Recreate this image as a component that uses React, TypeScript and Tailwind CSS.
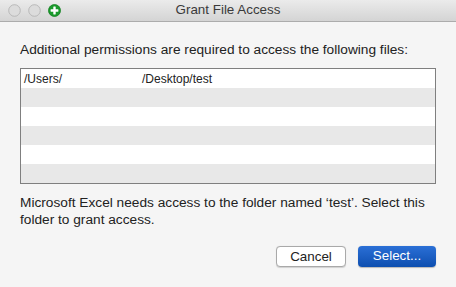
import React from 'react';

const rows = [0, 1, 2, 3, 4, 5];

const TrafficLight: React.FC<{ plus?: boolean }> = ({ plus }) =>
  plus ? (
    <svg width="13" height="13" viewBox="0 0 13 13">
      <circle cx="6.5" cy="6.5" r="6" fill="#1a9a2c" stroke="#12801f" strokeWidth="0.8" />
      <rect x="5.3" y="2.6" width="2.4" height="7.8" rx="0.4" fill="#fff" />
      <rect x="2.6" y="5.3" width="7.8" height="2.4" rx="0.4" fill="#fff" />
    </svg>
  ) : (
    <svg width="13" height="13" viewBox="0 0 13 13">
      <circle cx="6.5" cy="6.5" r="5.8" fill="#dcdcdc" stroke="#b4b4b4" strokeWidth="0.9" />
    </svg>
  );

export default function App() {
  return (
    <div
      className="w-[456px] h-[287px] bg-[#f5f5f5] flex flex-col text-[#222] overflow-hidden"
      style={{ fontFamily: '"Liberation Sans", Arial, sans-serif' }}
    >
      {/* Title bar */}
      <div className="h-[22px] shrink-0 flex items-center relative bg-gradient-to-b from-[#ebebeb] to-[#d4d4d4] border-b border-[#acacac]">
        <div className="flex items-center gap-[7px] pl-[8px]">
          <TrafficLight />
          <TrafficLight />
          <TrafficLight plus />
        </div>
        <div className="absolute inset-0 flex items-center justify-center text-[13.4px] text-[#3a3a3a]">
          Grant File Access
        </div>
      </div>

      {/* Body */}
      <div className="flex flex-col px-[20px] pt-[20px]">
        <p className="text-[13.7px] leading-[16px] whitespace-nowrap">
          Additional permissions are required to access the following files:
        </p>

        <div className="mt-[10px] w-[416px] border border-[#7f7f7f] bg-white">
          {rows.map(i => (
            <div
              key={i}
              className={`h-[19px] flex items-center text-[12px] ${i % 2 === 1 ? 'bg-[#e8e8e8]' : 'bg-white'}`}
            >
              {i === 0 && (
                <>
                  <span className="pl-[3px] w-[121px]">/Users/</span>
                  <span>/Desktop/test</span>
                </>
              )}
            </div>
          ))}
        </div>

        <p className="mt-[10px] text-[13.7px] leading-[17px]">
          Microsoft Excel needs access to the folder named ‘test’. Select this folder to grant access.
        </p>

        <div className="mt-[18px] flex justify-end gap-[12px]">
          <button className="w-[70px] h-[21px] rounded-[4px] border border-[#a9a9a9] bg-white text-[13.4px] text-[#222] shadow-[0_0.5px_1px_rgba(0,0,0,0.15)]">
            Cancel
          </button>
          <button className="w-[78px] h-[21px] rounded-[4px] bg-gradient-to-b from-[#2a6fd6] to-[#0d4fb0] text-white text-[13.4px] shadow-[0_0.5px_1px_rgba(0,0,0,0.25)]">
            Select...
          </button>
        </div>
      </div>
    </div>
  );
}
